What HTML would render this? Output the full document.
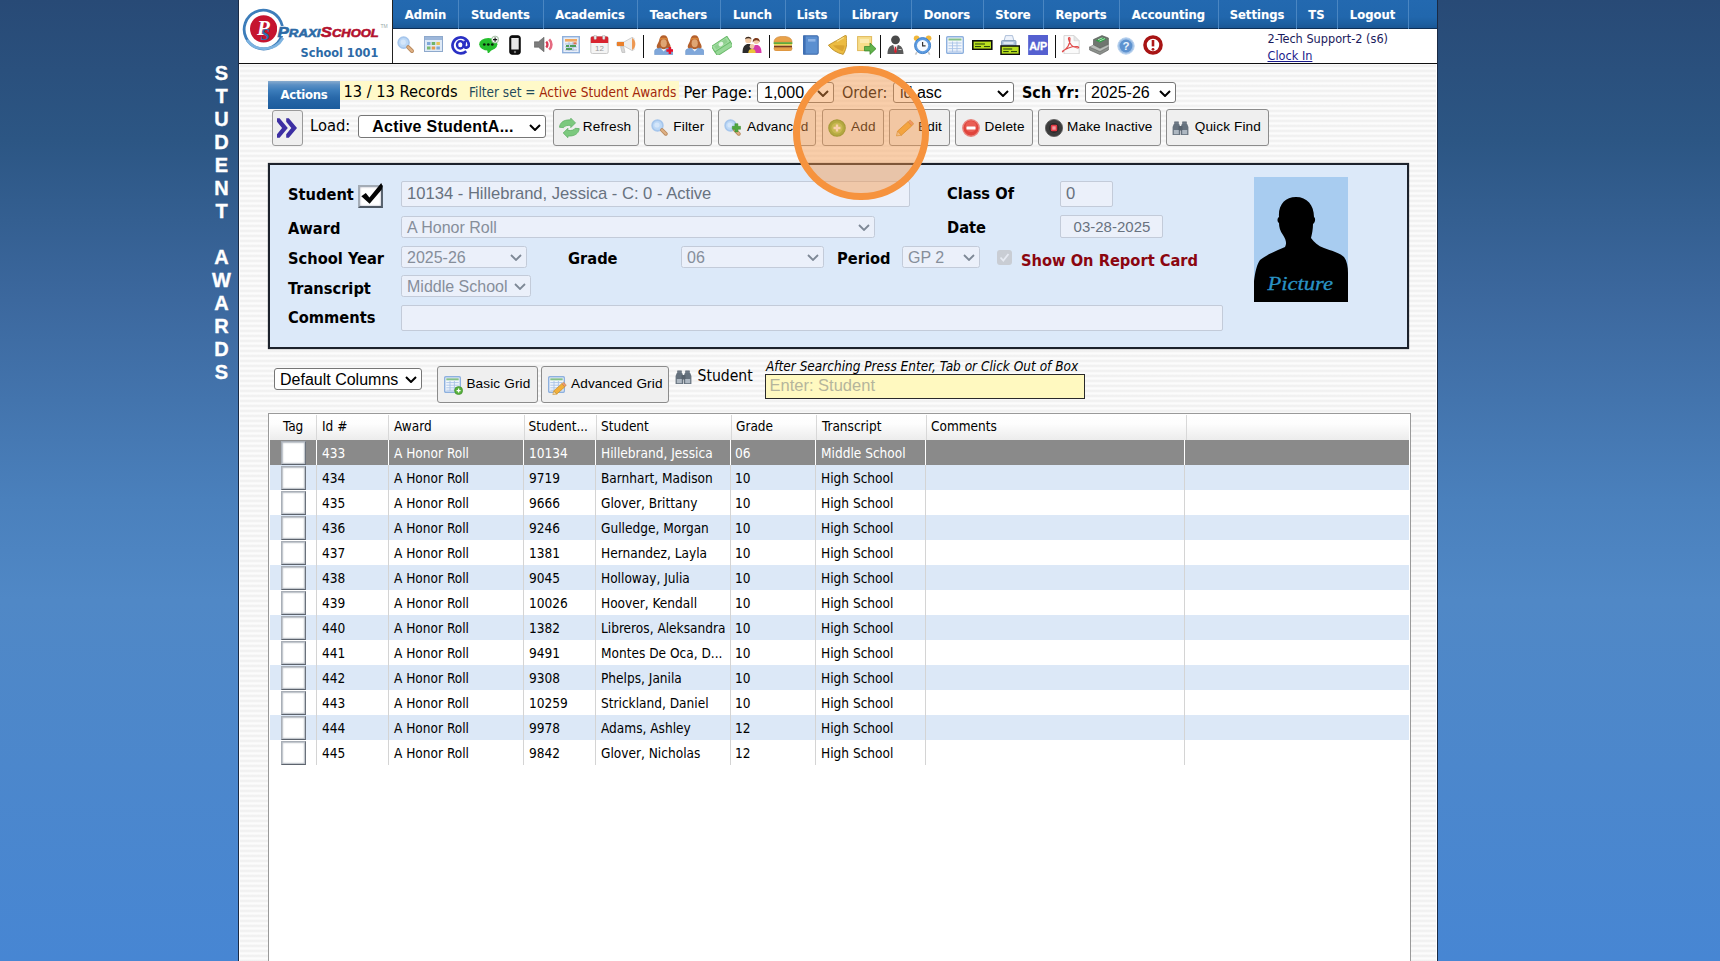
<!DOCTYPE html>
<html lang="en">
<head>
<meta charset="utf-8">
<title>Student Awards</title>
<style>
*{box-sizing:border-box;margin:0;padding:0}
html,body{width:1720px;height:961px;overflow:hidden}
body{position:relative;font-family:"DejaVu Sans Condensed","DejaVu Sans","Liberation Sans",sans-serif;font-size:13px;color:#000;
background:linear-gradient(to bottom,#284a76 0px,#2c5684 140px,#3c689e 300px,#4a80bc 500px,#5088c6 600px,#4786d3 961px);}
.abs{position:absolute}
#panel{position:absolute;left:238px;top:0;width:1200px;height:961px;border-left:1px solid #1a2a44;border-right:1px solid #1a2a44;
background:#fff repeating-linear-gradient(to bottom,#f1f1f1 0,#f2f2f2 1.8px,#fcfcfc 2.8px,#fcfcfc 4.2px,#f1f1f1 5px);box-shadow:inset 1px 0 0 #fff,inset -1px 0 0 #fff;}
#vt{position:absolute;left:210.5px;top:61.5px;width:22px;font-family:"Liberation Sans",sans-serif;font-weight:bold;font-size:20px;line-height:23px;color:#fff;text-align:center;-webkit-text-stroke:0.35px #fff}
#logo{position:absolute;left:239px;top:0;width:154px;height:63px;background:#fff;border-right:1px solid #222}
#menu{position:absolute;left:393px;top:0;width:1044px;height:29px;background:linear-gradient(to bottom,#2369b0 0,#2167ad 60%,#1d5fa0 85%,#1a5694 100%);border-bottom:1px solid #0e2f55}
#menu span{position:absolute;top:0;height:29px;line-height:29.4px;text-align:center;color:#fff;font-weight:bold;font-size:12.9px;border-right:1px solid #4a86c2;text-shadow:0 0 1px rgba(255,255,255,.3)}
#tool{position:absolute;left:393px;top:29px;width:1044px;height:34px;background:#fff}
#hline{position:absolute;left:239px;top:63px;width:1198px;height:1px;background:#111}

.tx{position:absolute;white-space:nowrap;line-height:1}
.btn{position:absolute;top:109px;height:37px;border:1px solid #8c8c8c;border-radius:3px;background:#efefef;font-family:"Liberation Sans",sans-serif;font-size:13.6px;letter-spacing:0.13px;color:#000;white-space:nowrap}
.btn b{position:absolute;top:9.2px;font-weight:normal;line-height:16px}
.btn svg{position:absolute}
.sel{position:absolute;border:1px solid #767676;border-radius:3px;background:#fff;font-family:"Liberation Sans",sans-serif;font-size:16px;color:#000;white-space:nowrap;overflow:hidden}
.sel i{position:absolute;font-style:normal;line-height:20px;top:0}
.sel svg{position:absolute;top:50%;margin-top:-3px;right:4px}
.dis{border-color:#c3cbd9;background:#ebf0fa;color:#868e9a;border-radius:2.5px}
.dis i{top:1px}
.inp{border-radius:2px;color:#68727f}
.lbl{position:absolute;margin-top:1px;font-weight:bold;font-size:16.3px;line-height:20px;white-space:nowrap;color:#000}

#grid{position:absolute;left:268px;top:413px;width:1143px;height:560px;background:#fff;border:1px solid #9a9a9a}
#gh{position:absolute;left:1px;top:1px;width:1139px;height:25px;background:linear-gradient(to bottom,#ffffff 0,#fdfdfd 35%,#ececec 100%)}
#gh span{position:absolute;top:0;height:25px;line-height:22.8px;font-size:13.5px;border-left:1px solid #d8d8d8;padding-left:5px;white-space:nowrap}
.gr{position:absolute;left:1px;width:1139px;height:25px;font-size:13.55px}
.gr span{position:absolute;top:0;height:25px;line-height:27px;border-left:1px solid #d4d4d4;padding-left:5px;white-space:nowrap;overflow:hidden}
.gr.a{background:#dce8f7}
.gr.s{background:#8a8a8a;color:#fff}
.gr.s span{border-left-color:#fff}
.cb{position:absolute;left:11px;top:1px;width:25px;height:24px;background:#fff;border:1.6px solid;border-color:#a9afb7 #6a717b #5c636d #a9afb7;box-shadow:inset 0 0 1.5px 1px #b4bac2}
</style>
</head>
<body>
<div id="vt">S<br>T<br>U<br>D<br>E<br>N<br>T<br><br>A<br>W<br>A<br>R<br>D<br>S</div>
<div id="panel"></div>
<div id="logo"></div>
<div id="menu">
<span style="left:0;width:66px">Admin</span>
<span style="left:65px;width:86px">Students</span>
<span style="left:150px;width:95px">Academics</span>
<span style="left:244px;width:84px">Teachers</span>
<span style="left:327px;width:66px">Lunch</span>
<span style="left:392px;width:55px">Lists</span>
<span style="left:446px;width:73px">Library</span>
<span style="left:518px;width:73px">Donors</span>
<span style="left:590px;width:61px">Store</span>
<span style="left:650px;width:77px">Reports</span>
<span style="left:726px;width:100px">Accounting</span>
<span style="left:825px;width:79px">Settings</span>
<span style="left:903px;width:42px">TS</span>
<span style="left:944px;width:72px">Logout</span>
</div>
<div id="tool"></div>
<div id="hline"></div>
<!--TB0--><svg class="abs" style="left:397px;top:36.3px" width="17.5" height="17.5" viewBox="0 0 17.5 17.5"><circle cx="6.6" cy="6.6" r="5.5" fill="#bcd8f6" stroke="#a6c6ec" stroke-width="1.6"/><circle cx="6.2" cy="6.2" r="2.6" fill="#d4e6fa"/><path d="M11.2 11.2 L15 15" stroke="#b98a5e" stroke-width="4" stroke-linecap="round"/><path d="M11.2 11.2 L15 15" stroke="#e0b184" stroke-width="2.2" stroke-linecap="round"/></svg>
<svg class="abs" style="left:424px;top:36.3px" width="19" height="16" viewBox="0 0 19 16"><rect x="0.5" y="0.5" width="18" height="15" fill="#dfeaf7" stroke="#8ea9cc"/><rect x="1" y="1" width="17" height="3" fill="#9db7da"/><rect x="3" y="6" width="3.5" height="3" fill="#7fa8d8"/><rect x="7.7" y="6" width="3.5" height="3" fill="#6fb36a"/><rect x="12.4" y="6" width="3.5" height="3" fill="#e7c45a"/><rect x="3" y="10.5" width="3.5" height="3" fill="#79b96f"/><rect x="7.7" y="10.5" width="3.5" height="3" fill="#e59a4c"/><rect x="12.4" y="10.5" width="3.5" height="3" fill="#7fa8d8"/></svg>
<svg class="abs" style="left:451px;top:34.5px" width="19" height="21" viewBox="0 0 19 21"><path d="M15.3 16.2 A8.2 8 0 1 1 17.9 9.8 C17.9 13 13.4 13.8 13.3 10.9 L13.9 5.6" fill="none" stroke="#2a30c4" stroke-width="2.7"/><ellipse cx="9.3" cy="9.8" rx="3.3" ry="3.7" fill="none" stroke="#2a30c4" stroke-width="2.4"/></svg>
<svg class="abs" style="left:478.7px;top:34.6px" width="20.3" height="18.6" viewBox="0 0 20.3 18.6"><path d="M8 14.3 L9 19 L13.5 14z" fill="#25bf2d"/><ellipse cx="9.3" cy="9.3" rx="9.1" ry="6.3" fill="#25bf2d"/><circle cx="5.3" cy="9.5" r="1.35" fill="#0a200a"/><circle cx="9.3" cy="9.5" r="1.35" fill="#0a200a"/><circle cx="13.3" cy="9.5" r="1.35" fill="#0a200a"/><circle cx="16.1" cy="4.6" r="3.5" fill="#f2f8f2" stroke="#8fb08f" stroke-width="0.8"/><path d="M14 4.6 h4.2 M16.1 2.5 v4.2" stroke="#111" stroke-width="1.1"/></svg>
<svg class="abs" style="left:509px;top:34.8px" width="12" height="20" viewBox="0 0 12 20"><rect x="0.8" y="0.8" width="10.4" height="18.4" rx="2" fill="#111" stroke="#000"/><rect x="2.3" y="3" width="7.4" height="11.5" fill="#e6e6e6"/><circle cx="6" cy="17" r="1.2" fill="#777"/></svg>
<svg class="abs" style="left:533.6px;top:37px" width="21" height="15" viewBox="0 0 21 15"><path d="M0.3 4.8 h4.2 l5.5 -4.6 v14.6 l-5.5 -4.6 h-4.2z" fill="#7c7c7c" stroke="#5e5e5e" stroke-width="0.6"/><path d="M12.2 4.6 a4 4 0 0 1 0 5.8" fill="none" stroke="#d83a55" stroke-width="2.4"/><path d="M15.2 2.4 a7 7 0 0 1 0 10.2" fill="none" stroke="#e56a80" stroke-width="2.6"/></svg>
<svg class="abs" style="left:562px;top:36.3px" width="18" height="17.4" viewBox="0 0 18 17.4"><rect x="0.7" y="0.7" width="16.6" height="16" fill="#e8eef8" stroke="#8fb0dc" stroke-width="1.4"/><rect x="3" y="3" width="12" height="2.6" fill="#f0a860"/><path d="M3 8 h12 M3 11 h12 M3 14 h12 M7 6 v9 M11 6 v9" stroke="#9fb6d6" stroke-width="0.8"/><rect x="4" y="9" width="3" height="2" fill="#4f9e5a"/><rect x="8" y="9" width="6" height="2" fill="#4f9e5a"/><rect x="4" y="12" width="6" height="2" fill="#4f9e5a"/><rect x="11.5" y="6.3" width="3" height="2" fill="#e0704a"/></svg>
<svg class="abs" style="left:589.5px;top:35.3px" width="19" height="19.4" viewBox="0 0 19 19.4"><rect x="0.8" y="1.5" width="17.4" height="17" rx="1.5" fill="#f4f4f4" stroke="#c9c9c9"/><path d="M0.8 3 a1.5 1.5 0 0 1 1.5 -1.5 h14.4 a1.5 1.5 0 0 1 1.5 1.5 v5 h-17.4z" fill="#d8232f"/><rect x="4" y="0" width="2.4" height="4.5" rx="1" fill="#eee" stroke="#999" stroke-width="0.5"/><rect x="12.6" y="0" width="2.4" height="4.5" rx="1" fill="#eee" stroke="#999" stroke-width="0.5"/><text x="9.5" y="16" text-anchor="middle" font-family="Liberation Sans,sans-serif" font-size="8" fill="#9a9a9a">12</text></svg>
<svg class="abs" style="left:616px;top:37.4px" width="20.5" height="17.2" viewBox="0 0 20.5 17.2"><path d="M2 5 h6 l8 -4.5 a2 2 0 0 1 2 1 v11 a2 2 0 0 1 -2 1 l-8 -4.5 h-6 a1.5 1.5 0 0 1 -1.5 -1.5 v-1 a1.5 1.5 0 0 1 1.5 -1.5z" fill="#efefef" stroke="#c4c4c4" stroke-width="0.8"/><path d="M1 5 h7 v4 h-7z" fill="#ea7f2a"/><path d="M16 1 a7 7 0 0 1 0 12" fill="#ef8b3a" opacity="0.85"/><path d="M4.5 9.5 l1.5 6 h3 l-1.3 -6z" fill="#d8d8d8" stroke="#b5b5b5" stroke-width="0.6"/></svg>
<div class="abs" style="left:643px;top:35px;width:1px;height:23px;background:#111"></div>
<svg class="abs" style="left:653.6px;top:34.8px" width="19.6" height="19.8" viewBox="0 0 19.6 19.8"><path d="M9.7 0.2 C12.5 0.2 13.6 2.2 14 4.5 C14.6 8 17 9.5 16.6 12.3 C16.3 14 13.5 14.3 9.7 14.3 C6 14.3 3.1 14 2.8 12.3 C2.4 9.5 4.8 8 5.4 4.5 C5.8 2.2 7 0.2 9.7 0.2z" fill="#b4602c"/><path d="M6 3.6 C7.5 2.4 12 2.4 13.4 3.6 L13.7 5 C12 4 7.5 4 5.7 5z" fill="#d98436"/><ellipse cx="9.7" cy="8.3" rx="3.1" ry="4" fill="#dfa574"/><path d="M0.6 19.7 L0.6 16 C0.6 14.3 3 13.4 6.2 13 L9.7 15.2 L13.2 13 C16.4 13.4 18.9 14.3 18.9 16 L18.9 19.7z" fill="#7fa7da" stroke="#6a93c8" stroke-width="0.5"/><path d="M6.6 13.2 L9.7 16.6 L12.8 13.2 L9.7 14.6z" fill="#eef3fa"/><path d="M12.4 15.4 h7 M15.9 11.9 v7" stroke="#e8102a" stroke-width="2.5"/></svg>
<svg class="abs" style="left:684.6px;top:34.8px" width="19.6" height="19.8" viewBox="0 0 19.6 19.8"><path d="M9.7 0.2 C12.5 0.2 13.6 2.2 14 4.5 C14.6 8 17 9.5 16.6 12.3 C16.3 14 13.5 14.3 9.7 14.3 C6 14.3 3.1 14 2.8 12.3 C2.4 9.5 4.8 8 5.4 4.5 C5.8 2.2 7 0.2 9.7 0.2z" fill="#b4602c"/><path d="M6 3.6 C7.5 2.4 12 2.4 13.4 3.6 L13.7 5 C12 4 7.5 4 5.7 5z" fill="#d98436"/><ellipse cx="9.7" cy="8.3" rx="3.1" ry="4" fill="#dfa574"/><path d="M0.6 19.7 L0.6 16 C0.6 14.3 3 13.4 6.2 13 L9.7 15.2 L13.2 13 C16.4 13.4 18.9 14.3 18.9 16 L18.9 19.7z" fill="#7fa7da" stroke="#6a93c8" stroke-width="0.5"/><path d="M6.6 13.2 L9.7 16.6 L12.8 13.2 L9.7 14.6z" fill="#eef3fa"/></svg>
<svg class="abs" style="left:711.8px;top:35.5px" width="20" height="19.5" viewBox="0 0 20 20"><g transform="rotate(-33 10 10)"><rect x="0.5" y="9.6" width="19" height="6.6" fill="#97d897" stroke="#68b868" stroke-width="1"/><rect x="0.5" y="4.6" width="19" height="6.8" fill="#a2dea2" stroke="#68b868" stroke-width="1"/><rect x="3" y="6" width="14" height="4" fill="#8fd08f"/><ellipse cx="10" cy="8" rx="2.6" ry="2" fill="#e2f5e2"/></g></svg>
<svg class="abs" style="left:742px;top:36px" width="20" height="17.2" viewBox="0 0 20 17.2"><circle cx="6.3" cy="4" r="3.2" fill="#f1c9a5"/><path d="M3 3.3 C3.5 0 9 0 9.5 3.3 C8 2 5 2 3 3.3z" fill="#3a2a20"/><path d="M0.5 17 C0.5 10.5 3 8 6.5 8 C10 8 11.5 10.5 11.5 17z" fill="#2b2b2b"/><circle cx="14.3" cy="5" r="3" fill="#f1c9a5"/><path d="M10.8 6.5 C10 0.5 18.5 0.5 17.8 6.5 C17 3.5 12 3.5 10.8 6.5z" fill="#7b3a1e"/><path d="M9.5 17 C9.5 11.5 11.5 9 14.5 9 C17.5 9 19.5 11.5 19.5 17z" fill="#d63aa8"/><circle cx="10" cy="10.5" r="2.4" fill="#f1c9a5"/><path d="M6.3 17 C6.3 14 8 13 10 13 C12 13 13.7 14 13.7 17z" fill="#e9c43a"/></svg>
<div class="abs" style="left:769px;top:35px;width:1px;height:23px;background:#111"></div>
<svg class="abs" style="left:773px;top:35.9px" width="20" height="15.2" viewBox="0 0 20 15.2"><path d="M1 6.2 C1 1.8 5 0.4 10 0.4 C15 0.4 19 1.8 19 6.2z" fill="#e9a24a" stroke="#c9822e" stroke-width="0.6"/><rect x="0.6" y="6.2" width="18.8" height="1.9" fill="#62a83a"/><rect x="1" y="8.1" width="18" height="1.6" fill="#e8d34a"/><rect x="1" y="9.7" width="18" height="2" fill="#7a3b1d"/><path d="M1 11.7 h18 v0.8 a2.5 2.5 0 0 1 -2.5 2.5 h-13 a2.5 2.5 0 0 1 -2.5 -2.5z" fill="#e9a24a" stroke="#c9822e" stroke-width="0.6"/></svg>
<svg class="abs" style="left:802px;top:35.3px" width="17" height="20" viewBox="0 0 17 20"><path d="M1.5 0.8 h13.5 a1.2 1.2 0 0 1 1.2 1.2 v16 a1.2 1.2 0 0 1 -1.2 1.2 h-13.5z" fill="#5b8fd0" stroke="#3a67a8" stroke-width="1"/><rect x="1" y="0.8" width="2.6" height="18.4" fill="#3f6fb3"/><rect x="6" y="4" width="7.5" height="2.6" fill="#8eb4e6"/></svg>
<svg class="abs" style="left:828px;top:34.8px" width="19.4" height="19.8" viewBox="0 0 19.4 19.8"><path d="M16.6 0.8 C17.6 -0.2 19 0.6 18.3 2 C19.2 6 19.2 13 15.2 19.4 C9 18 3.5 14.5 0.4 10.2 C5.5 7 12 4 16.6 0.8z" fill="#ecbc42" stroke="#bb902c" stroke-width="0.9"/><path d="M5 10.6 C8 13.5 11.5 15.5 14.6 16.2 C15.6 14.6 16.4 12.5 16.7 10.6 C13 10 9 10 5 10.6z" fill="#d9a431"/><path d="M9 6.5 C11.5 5.3 14 3.8 16 2.6" stroke="#f6dc8a" stroke-width="1.2" fill="none"/></svg>
<svg class="abs" style="left:857px;top:36.3px" width="19.6" height="18.6" viewBox="0 0 19.6 18.6"><rect x="0.6" y="0.6" width="14" height="14" fill="#f7dd8a" stroke="#e0b95a" stroke-width="1"/><rect x="3" y="3" width="9" height="4" fill="#fbeab0"/><path d="M7.5 10.5 h5.5 v-3.5 l6 5.7 l-6 5.7 v-3.5 h-5.5z" fill="#62b34a" stroke="#3e8a2e" stroke-width="0.8"/></svg>
<div class="abs" style="left:880px;top:35px;width:1px;height:23px;background:#111"></div>
<svg class="abs" style="left:887px;top:35px" width="17" height="19.4" viewBox="0 0 17 19.4"><circle cx="8.5" cy="4.8" r="4.4" fill="#4a4a4a"/><path d="M0.5 19 C0.5 12.5 3.5 10.5 6 10 L8.5 12 L11 10 C13.5 10.5 16.5 12.5 16.5 19z" fill="#5a5a5a"/><path d="M6.3 10 L8.5 18.5 L10.7 10 L8.5 11.8z" fill="#eeeeee"/><path d="M7.9 11.8 h1.2 l0.7 4.8 l-1.3 1.9 l-1.3 -1.9z" fill="#d81e2c"/><rect x="11.5" y="14" width="3" height="1" fill="#ccc"/></svg>
<svg class="abs" style="left:913px;top:34.6px" width="19.4" height="20" viewBox="0 0 19.4 20"><circle cx="3.6" cy="3.2" r="2.8" fill="#f0b73c"/><circle cx="15.6" cy="3.2" r="2.8" fill="#f0b73c"/><path d="M4 17 L2.5 19.7 M15.2 17 L16.7 19.7" stroke="#c9c9c9" stroke-width="1.6"/><circle cx="9.6" cy="10.6" r="8" fill="#5d9be0" stroke="#3f7fc8" stroke-width="1"/><circle cx="9.6" cy="10.6" r="5.6" fill="#f5f9fe"/><path d="M9.6 7 V10.8 L12.6 10.8" stroke="#333" stroke-width="1.2" fill="none"/></svg>
<div class="abs" style="left:939px;top:35px;width:1px;height:23px;background:#111"></div>
<svg class="abs" style="left:946px;top:35.8px" width="18" height="18" viewBox="0 0 18 18"><rect x="0.7" y="0.7" width="16.6" height="16.6" rx="1" fill="#f3f7fc" stroke="#8db0de" stroke-width="1.4"/><rect x="2.5" y="2.5" width="13" height="2" fill="#86c08a"/><path d="M2.5 7 h13 M2.5 9.8 h13 M2.5 12.6 h13 M2.5 15.2 h13 M6.5 5.5 v10.5 M11 5.5 v10.5" stroke="#a9c3e6" stroke-width="0.9"/></svg>
<svg class="abs" style="left:972.4px;top:39.7px" width="20.6" height="10.2" viewBox="0 0 20.6 10.2"><rect x="0.8" y="0.8" width="19" height="8.6" fill="#b9e01e" stroke="#0d0d0d" stroke-width="1.6"/><path d="M3 4 h10 M3 6.6 h6 M12 6.6 h6" stroke="#1e3a0a" stroke-width="1"/></svg>
<svg class="abs" style="left:1000px;top:35.3px" width="20" height="20" viewBox="0 0 20 20"><path d="M4 6 L5.5 0.6 h7 L14 6z" fill="#eef3fb" stroke="#9ab0cf" stroke-width="0.8"/><rect x="1.5" y="5.5" width="14.5" height="7" rx="1" fill="#a9bfd8" stroke="#7f98b8" stroke-width="0.8"/><rect x="3.5" y="7" width="10" height="2" fill="#dfe8f3"/><rect x="1" y="11" width="18.4" height="8.4" fill="#b9e01e" stroke="#0d0d0d" stroke-width="1.5"/><path d="M3.2 14 h9 M3.2 16.6 h5.5 M11 16.6 h6" stroke="#1e3a0a" stroke-width="1"/></svg>
<svg class="abs" style="left:1028px;top:35px" width="20.3" height="20" viewBox="0 0 20 20"><rect width="20" height="20" fill="#5560d0"/><text x="10" y="14.6" text-anchor="middle" font-family="Liberation Sans,sans-serif" font-weight="bold" font-size="10.8" fill="#fff" stroke="#fff" stroke-width="0.3">A/P</text></svg>
<div class="abs" style="left:1055px;top:35px;width:1px;height:23px;background:#111"></div>
<svg class="abs" style="left:1061.4px;top:35px" width="19.2" height="19.4" viewBox="0 0 19.2 19.4"><path d="M3 0.6 h10 l5.2 5.2 v13 h-15.2z" fill="#fafafa" stroke="#d0d0d0" stroke-width="0.9"/><path d="M13 0.6 v5.2 h5.2z" fill="#e6e6e6" stroke="#d0d0d0" stroke-width="0.6"/><path d="M1 16.5 C6 14.5 9.5 9 9 3.5 C8.8 2 7.2 2.3 7.5 4 C8.5 9 12 12.5 16.5 13 C18.2 13.2 18 11.6 16.3 11.5 C11 11.3 5 13.3 1.2 17.2" fill="none" stroke="#e04a4a" stroke-width="1.2"/></svg>
<svg class="abs" style="left:1089px;top:35px" width="20" height="19.8" viewBox="0 0 20 19.8"><path d="M4.5 4.5 L13 0.6 L19.4 3 L19.4 9.5 L11 13.5 L4.5 10z" fill="#6f766f" stroke="#4a504a" stroke-width="0.6"/><path d="M6.5 5.5 L13 2.6 L17.5 4.3 L11 7.5z" fill="#2f9e46"/><path d="M9 4.8 L13.5 2.8 M10.5 6 L16 3.6" stroke="#b9f0c2" stroke-width="0.9"/><path d="M0.6 12 L11 16.5 L19.4 12 L19.4 15 L11 19.6 L0.6 15z" fill="#8c918c" stroke="#555" stroke-width="0.6"/><path d="M0.6 12 L4.5 10 L11 13.5 L19.4 9.5 L19.4 12 L11 16.5z" fill="#b9beb9" stroke="#6a6a6a" stroke-width="0.5"/></svg>
<svg class="abs" style="left:1117px;top:36.6px" width="18" height="18" viewBox="0 0 18 18"><circle cx="9" cy="9" r="8.2" fill="#9fc0e6" stroke="#b9d2ee" stroke-width="1"/><circle cx="9" cy="9" r="6.4" fill="#5d92cf"/><text x="9" y="13.2" text-anchor="middle" font-family="Liberation Sans,sans-serif" font-weight="bold" font-size="11.5" fill="#e9f2fc">?</text></svg>
<svg class="abs" style="left:1143px;top:34.8px" width="20" height="20" viewBox="0 0 20 20"><circle cx="10" cy="10" r="8" fill="#fff" stroke="#a81414" stroke-width="3.6"/><path d="M10 5 V11.4" stroke="#b01818" stroke-width="2.6"/><circle cx="10" cy="14.3" r="1.4" fill="#b01818"/></svg>
<!--TB1-->




<div class="abs" style="left:268px;top:81px;width:72px;height:28px;background:linear-gradient(to bottom,#88abce 0,#5a8fc4 14%,#3b7cba 34%,#2868a9 60%,#1c5c9c 100%);color:#fff;font-weight:bold;font-size:13px;text-align:center;line-height:27px;letter-spacing:-0.3px">Actions</div>
<div class="abs" style="left:340px;top:81px;width:339px;height:19px;background:#fff9c9"></div>
<div class="tx" style="left:343.4px;top:84px;font-size:16.3px">13 / 13 Records</div>
<div class="tx" style="left:469px;top:86px;font-size:13.5px;color:#1f4a5c">Filter set = <span style="color:#a3260a">Active Student Awards</span></div>
<div class="tx" style="left:683.4px;top:85px;font-size:16.4px">Per Page:</div>
<div class="sel" style="left:757px;top:82px;width:77px;height:21px"><i style="left:6px">1,000</i><svg width="12" height="7" viewBox="0 0 12 7"><path d="M1 1 L6 6 L11 1" fill="none" stroke="#000" stroke-width="2"/></svg></div>
<div class="tx" style="left:842px;top:85px;font-size:16px">Order:</div>
<div class="sel" style="left:893px;top:82px;width:121px;height:21px"><i style="left:6px">id asc</i><svg width="12" height="7" viewBox="0 0 12 7"><path d="M1 1 L6 6 L11 1" fill="none" stroke="#000" stroke-width="2"/></svg></div>
<div class="tx" style="left:1022px;top:85px;font-size:16px;font-weight:bold">Sch Yr:</div>
<div class="sel" style="left:1085px;top:82px;width:91px;height:21px"><i style="left:5px">2025-26</i><svg width="12" height="7" viewBox="0 0 12 7"><path d="M1 1 L6 6 L11 1" fill="none" stroke="#000" stroke-width="2"/></svg></div>
<!--ROW1-->
<div class="btn" style="left:272px;top:110px;width:31px;height:36px;border-color:#9a9a9a"><svg style="left:4px;top:7.3px" width="21" height="20" viewBox="0 0 21 19.7"><path d="M0 0 L2.6 0 L10.8 9.85 L2.6 19.7 L0 19.7 L0 16 L5.1 9.85 L0 3.7 Z" fill="#3d2fa3"/><path transform="translate(9.2 0)" d="M0 0 L2.6 0 L10.8 9.85 L2.6 19.7 L0 19.7 L0 16 L5.1 9.85 L0 3.7 Z" fill="#3d2fa3"/></svg></div>
<div class="tx" style="left:310px;top:118px;font-size:16.4px">Load:</div>
<div class="sel" style="left:358px;top:115px;width:188px;height:23px;font-weight:bold"><i style="left:13.2px;top:1px;letter-spacing:0.26px">Active StudentA...</i><svg width="12" height="7" viewBox="0 0 12 7"><path d="M1 1 L6 6 L11 1" fill="none" stroke="#000" stroke-width="2"/></svg></div>
<div class="btn" style="left:553px;width:86px"><b style="left:28.8px">Refresh</b></div>
<div class="btn" style="left:644px;width:68px"><b style="left:28.3px">Filter</b></div>
<div class="btn" style="left:718px;width:98px"><b style="left:28px">Advanced</b></div>
<div class="btn" style="left:822px;width:62px"><b style="left:28px">Add</b></div>
<div class="btn" style="left:889px;width:61px"><b style="left:28px">Edit</b></div>
<div class="btn" style="left:955px;width:78px"><b style="left:28.6px">Delete</b></div>
<div class="btn" style="left:1038px;width:123px"><b style="left:28px">Make Inactive</b></div>
<div class="btn" style="left:1166px;width:103px"><b style="left:27.7px">Quick Find</b></div>
<!--ROW2-->
<div class="abs" style="left:268px;top:163px;width:1141px;height:186px;background:#dce9f9;border:2px solid #1c222c;box-shadow:0 0 1px #555"></div>
<div class="lbl" style="left:288px;top:184px">Student</div>
<div class="abs" style="left:358px;top:184.5px;width:25px;height:23px;background:#fff;border:2px solid;border-color:#a4acb6 #5a6470 #4e5864 #a4acb6;box-shadow:inset 0 0 2px #99a"></div>
<svg class="abs" style="left:358px;top:180px" width="28" height="28" viewBox="0 -4.5 28 28"><path d="M3.3 11.7 L7.8 8.5 L11.4 13 L23.2 -1.6 L24.6 1.8 L23.6 5.3 L11.6 19.2 Z" fill="#050505"/></svg>
<div class="sel dis inp" style="left:401px;top:181px;width:509px;height:26px"><i style="left:5px;top:2px;font-size:16.6px">10134 - Hillebrand, Jessica - C: 0 - Active</i></div>
<div class="lbl" style="left:288px;top:218px">Award</div>
<div class="sel dis" style="left:401px;top:216px;width:474px;height:22px"><i style="left:5px">A Honor Roll</i><svg width="12" height="7" viewBox="0 0 12 7"><path d="M1 1 L6 6 L11 1" fill="none" stroke="#7e8896" stroke-width="1.8"/></svg></div>
<div class="lbl" style="left:288px;top:248px">School Year</div>
<div class="sel dis" style="left:401px;top:246px;width:126px;height:22px"><i style="left:5px">2025-26</i><svg width="12" height="7" viewBox="0 0 12 7"><path d="M1 1 L6 6 L11 1" fill="none" stroke="#7e8896" stroke-width="1.8"/></svg></div>
<div class="lbl" style="left:568px;top:248px">Grade</div>
<div class="sel dis" style="left:681px;top:246px;width:143px;height:22px"><i style="left:5px">06</i><svg width="12" height="7" viewBox="0 0 12 7"><path d="M1 1 L6 6 L11 1" fill="none" stroke="#7e8896" stroke-width="1.8"/></svg></div>
<div class="lbl" style="left:837px;top:248px">Period</div>
<div class="sel dis" style="left:902px;top:246px;width:78px;height:22px"><i style="left:5px">GP 2</i><svg width="12" height="7" viewBox="0 0 12 7"><path d="M1 1 L6 6 L11 1" fill="none" stroke="#7e8896" stroke-width="1.8"/></svg></div>
<div class="abs" style="left:997px;top:250px;width:15px;height:15px;background:#c9cdd4;border-radius:3px"><svg class="abs" style="left:2px;top:2px" width="11" height="11" viewBox="0 0 11 11"><path d="M1.5 5.5 L4.3 8.5 L9.5 2" fill="none" stroke="#e6eaf2" stroke-width="1.8"/></svg></div>
<div class="lbl" style="left:1021px;top:250px;color:#8b0610">Show On Report Card</div>
<div class="lbl" style="left:288px;top:278px">Transcript</div>
<div class="sel dis" style="left:401px;top:275px;width:130px;height:22px"><i style="left:5px">Middle School</i><svg width="12" height="7" viewBox="0 0 12 7"><path d="M1 1 L6 6 L11 1" fill="none" stroke="#7e8896" stroke-width="1.8"/></svg></div>
<div class="lbl" style="left:288px;top:307px">Comments</div>
<div class="sel dis inp" style="left:401px;top:305px;width:822px;height:26px"></div>
<div class="lbl" style="left:947px;top:183px">Class Of</div>
<div class="sel dis inp" style="left:1060px;top:181px;width:53px;height:26px"><i style="left:5px;top:2px;font-size:16.6px">0</i></div>
<div class="lbl" style="left:947px;top:217px">Date</div>
<div class="sel dis inp" style="left:1060px;top:215px;width:103px;height:23px"><i style="left:12.6px;top:1px;font-size:15px">03-28-2025</i></div>
<svg class="abs" style="left:1254px;top:177px" width="94" height="125" viewBox="0 0 94 125">
<rect width="94" height="125" fill="#a8ccf0"/>
<path d="M0 125 L0 104 C1 95 3 87 6 83 C12 78 22 74 31 70 C33 66 32 63 29 58 C26 54 25 50 25 46 C23 45 23 41 25 40 C24 28 31 20 42 20 C53 20 60 28 60 40 C62 41 61 46 59 47 C59 52 58 57 57 61 C60 65 64 69 70 71 C78 74 86 76 90 80 C93 84 94 90 94 96 L94 125 Z" fill="#000"/>
<text x="13.5" y="113" textLength="65.5" lengthAdjust="spacingAndGlyphs" font-family="Liberation Serif,serif" font-style="italic" font-size="19" fill="#2a93c4" stroke="#2a93c4" stroke-width="0.3">Picture</text>
</svg>
<!--FORM-->
<div class="sel" style="left:274px;top:368px;width:148px;height:22px"><i style="left:5px;top:1px">Default Columns</i><svg width="12" height="7" viewBox="0 0 12 7"><path d="M1 1 L6 6 L11 1" fill="none" stroke="#000" stroke-width="2"/></svg></div>
<div class="btn" style="left:437px;top:366px;width:101px"><b style="left:28.4px">Basic Grid</b></div>
<div class="btn" style="left:541px;top:366px;width:128px"><b style="left:29px">Advanced Grid</b></div>
<div class="tx" style="left:697.5px;top:369px;font-size:15.6px">Student</div>
<div class="tx" style="left:766px;top:360px;font-size:13.5px;font-style:italic">After Searching Press Enter, Tab or Click Out of Box</div>
<div class="abs" style="left:765px;top:374px;width:320px;height:25px;background:#fff9c0;border:1px solid #2a2a2a;font-family:'Liberation Sans',sans-serif;font-size:16.5px;color:#b5b59c;line-height:20.4px;padding-left:3.5px">Enter: Student</div>
<!--GRIDBAR-->
<div id="grid"><div id="gh"><span style="left:0px;width:47px;border-left:0;padding-left:13px">Tag</span><span style="left:46px;width:72px">Id #</span><span style="left:118px;width:135px">Award</span><span style="left:254px;width:72px;padding-left:3.6px">Student...</span><span style="left:326px;width:135px;padding-left:4px">Student</span><span style="left:461px;width:85px;padding-left:4px">Grade</span><span style="left:546px;width:110px">Transcript</span><span style="left:656px;width:259px;padding-left:4px">Comments</span><span style="left:916px;width:225px"></span></div>
<div class="gr s" style="top:26px"><span style="left:0;width:47px;border-left:0"><em class="cb"></em></span><span style="left:46px;width:72px">433</span><span style="left:118px;width:135px">A Honor Roll</span><span style="left:253px;width:72px">10134</span><span style="left:325px;width:135px">Hillebrand, Jessica</span><span style="left:460px;width:85px;padding-left:4px">06</span><span style="left:545px;width:110px">Middle School</span><span style="left:655px;width:259px"></span><span style="left:914px;width:225px"></span></div>
<div class="gr a" style="top:51px"><span style="left:0;width:47px;border-left:0"><em class="cb"></em></span><span style="left:46px;width:72px">434</span><span style="left:118px;width:135px">A Honor Roll</span><span style="left:253px;width:72px">9719</span><span style="left:325px;width:135px">Barnhart, Madison</span><span style="left:460px;width:85px;padding-left:4px">10</span><span style="left:545px;width:110px">High School</span><span style="left:655px;width:259px"></span><span style="left:914px;width:225px"></span></div>
<div class="gr" style="top:76px"><span style="left:0;width:47px;border-left:0"><em class="cb"></em></span><span style="left:46px;width:72px">435</span><span style="left:118px;width:135px">A Honor Roll</span><span style="left:253px;width:72px">9666</span><span style="left:325px;width:135px">Glover, Brittany</span><span style="left:460px;width:85px;padding-left:4px">10</span><span style="left:545px;width:110px">High School</span><span style="left:655px;width:259px"></span><span style="left:914px;width:225px"></span></div>
<div class="gr a" style="top:101px"><span style="left:0;width:47px;border-left:0"><em class="cb"></em></span><span style="left:46px;width:72px">436</span><span style="left:118px;width:135px">A Honor Roll</span><span style="left:253px;width:72px">9246</span><span style="left:325px;width:135px">Gulledge, Morgan</span><span style="left:460px;width:85px;padding-left:4px">10</span><span style="left:545px;width:110px">High School</span><span style="left:655px;width:259px"></span><span style="left:914px;width:225px"></span></div>
<div class="gr" style="top:126px"><span style="left:0;width:47px;border-left:0"><em class="cb"></em></span><span style="left:46px;width:72px">437</span><span style="left:118px;width:135px">A Honor Roll</span><span style="left:253px;width:72px">1381</span><span style="left:325px;width:135px">Hernandez, Layla</span><span style="left:460px;width:85px;padding-left:4px">10</span><span style="left:545px;width:110px">High School</span><span style="left:655px;width:259px"></span><span style="left:914px;width:225px"></span></div>
<div class="gr a" style="top:151px"><span style="left:0;width:47px;border-left:0"><em class="cb"></em></span><span style="left:46px;width:72px">438</span><span style="left:118px;width:135px">A Honor Roll</span><span style="left:253px;width:72px">9045</span><span style="left:325px;width:135px">Holloway, Julia</span><span style="left:460px;width:85px;padding-left:4px">10</span><span style="left:545px;width:110px">High School</span><span style="left:655px;width:259px"></span><span style="left:914px;width:225px"></span></div>
<div class="gr" style="top:176px"><span style="left:0;width:47px;border-left:0"><em class="cb"></em></span><span style="left:46px;width:72px">439</span><span style="left:118px;width:135px">A Honor Roll</span><span style="left:253px;width:72px">10026</span><span style="left:325px;width:135px">Hoover, Kendall</span><span style="left:460px;width:85px;padding-left:4px">10</span><span style="left:545px;width:110px">High School</span><span style="left:655px;width:259px"></span><span style="left:914px;width:225px"></span></div>
<div class="gr a" style="top:201px"><span style="left:0;width:47px;border-left:0"><em class="cb"></em></span><span style="left:46px;width:72px">440</span><span style="left:118px;width:135px">A Honor Roll</span><span style="left:253px;width:72px">1382</span><span style="left:325px;width:135px">Libreros, Aleksandra</span><span style="left:460px;width:85px;padding-left:4px">10</span><span style="left:545px;width:110px">High School</span><span style="left:655px;width:259px"></span><span style="left:914px;width:225px"></span></div>
<div class="gr" style="top:226px"><span style="left:0;width:47px;border-left:0"><em class="cb"></em></span><span style="left:46px;width:72px">441</span><span style="left:118px;width:135px">A Honor Roll</span><span style="left:253px;width:72px">9491</span><span style="left:325px;width:135px">Montes De Oca, D...</span><span style="left:460px;width:85px;padding-left:4px">10</span><span style="left:545px;width:110px">High School</span><span style="left:655px;width:259px"></span><span style="left:914px;width:225px"></span></div>
<div class="gr a" style="top:251px"><span style="left:0;width:47px;border-left:0"><em class="cb"></em></span><span style="left:46px;width:72px">442</span><span style="left:118px;width:135px">A Honor Roll</span><span style="left:253px;width:72px">9308</span><span style="left:325px;width:135px">Phelps, Janila</span><span style="left:460px;width:85px;padding-left:4px">10</span><span style="left:545px;width:110px">High School</span><span style="left:655px;width:259px"></span><span style="left:914px;width:225px"></span></div>
<div class="gr" style="top:276px"><span style="left:0;width:47px;border-left:0"><em class="cb"></em></span><span style="left:46px;width:72px">443</span><span style="left:118px;width:135px">A Honor Roll</span><span style="left:253px;width:72px">10259</span><span style="left:325px;width:135px">Strickland, Daniel</span><span style="left:460px;width:85px;padding-left:4px">10</span><span style="left:545px;width:110px">High School</span><span style="left:655px;width:259px"></span><span style="left:914px;width:225px"></span></div>
<div class="gr a" style="top:301px"><span style="left:0;width:47px;border-left:0"><em class="cb"></em></span><span style="left:46px;width:72px">444</span><span style="left:118px;width:135px">A Honor Roll</span><span style="left:253px;width:72px">9978</span><span style="left:325px;width:135px">Adams, Ashley</span><span style="left:460px;width:85px;padding-left:4px">12</span><span style="left:545px;width:110px">High School</span><span style="left:655px;width:259px"></span><span style="left:914px;width:225px"></span></div>
<div class="gr" style="top:326px"><span style="left:0;width:47px;border-left:0"><em class="cb"></em></span><span style="left:46px;width:72px">445</span><span style="left:118px;width:135px">A Honor Roll</span><span style="left:253px;width:72px">9842</span><span style="left:325px;width:135px">Glover, Nicholas</span><span style="left:460px;width:85px;padding-left:4px">12</span><span style="left:545px;width:110px">High School</span><span style="left:655px;width:259px"></span><span style="left:914px;width:225px"></span></div>
</div>
<!--GRID-->
<!--BI0--><svg class="abs" style="left:558.7px;top:118px" width="21" height="20" viewBox="0 0 21 20"><path d="M0.5 9.3 C0.8 5.5 3.5 2.6 8.3 2 L11.8 1.8 L11.8 0.2 L16.5 4.9 L11.8 9.6 L11.8 7.4 C8 7.2 5.5 7.8 4.6 9.6 Z" fill="#7cc97e" stroke="#5fb064" stroke-width="0.8"/><path d="M20.2 10.6 C19.9 14.4 17.2 17.3 12.4 17.9 L8.9 18.1 L8.9 19.7 L4.2 15 L8.9 10.3 L8.9 12.5 C12.7 12.7 15.2 12.1 16.1 10.3 Z" fill="#7cc97e" stroke="#5fb064" stroke-width="0.8"/></svg>
<svg class="abs" style="left:651px;top:119px" width="17" height="17" viewBox="0 0 17 17"><circle cx="6.5" cy="6.5" r="5.4" fill="#bcd8f6" stroke="#a6c6ec" stroke-width="1.6"/><circle cx="6" cy="6" r="2.6" fill="#d4e6fa"/><path d="M11 11 L14.8 14.8" stroke="#b98a5e" stroke-width="3.8" stroke-linecap="round"/><path d="M11 11 L14.8 14.8" stroke="#e0b184" stroke-width="2" stroke-linecap="round"/></svg>
<svg class="abs" style="left:724.4px;top:119px" width="17" height="17" viewBox="0 0 17 17"><circle cx="6.5" cy="6.5" r="5.4" fill="#bcd8f6" stroke="#a6c6ec" stroke-width="1.6"/><circle cx="6" cy="6" r="2.6" fill="#d4e6fa"/><path d="M11 11 L14.8 14.8" stroke="#b98a5e" stroke-width="3.8" stroke-linecap="round"/><path d="M11 11 L14.8 14.8" stroke="#e0b184" stroke-width="2" stroke-linecap="round"/><path d="M8.3 7.3 h2.6 v-2.6 h3 v2.6 h2.6 v3 h-2.6 v2.6 h-3 v-2.6 h-2.6z" fill="#4fa83f" stroke="#3a8a2e" stroke-width="0.5"/></svg>
<svg class="abs" style="left:828px;top:118.8px" width="18" height="18" viewBox="0 0 18 18"><circle cx="9" cy="9" r="8.2" fill="#7fba3c" stroke="#6aa030" stroke-width="1.2"/><circle cx="9" cy="9" r="5.6" fill="#a5d45c"/><path d="M5.5 9 h7 M9 5.5 v7" stroke="#fff" stroke-width="2.4"/></svg>
<svg class="abs" style="left:896px;top:119px" width="19" height="18" viewBox="0 0 19 18"><g transform="rotate(-42 9.5 9)"><rect x="1.5" y="6" width="14" height="5.6" fill="#f2b03a" stroke="#c88a24" stroke-width="0.8"/><rect x="15.5" y="6" width="3" height="5.6" rx="1.2" fill="#e9967a" stroke="#c88a24" stroke-width="0.6"/><path d="M1.5 6 L-2.5 8.8 L1.5 11.6z" fill="#f3dcae" stroke="#c88a24" stroke-width="0.6"/></g></svg>
<svg class="abs" style="left:962px;top:118.8px" width="18" height="18" viewBox="0 0 18 18"><circle cx="9" cy="9" r="8.2" fill="#e0443c" stroke="#e8837c" stroke-width="1.4"/><circle cx="9" cy="7.5" r="5.5" fill="#ec6a60" opacity="0.7"/><rect x="4.5" y="7.5" width="9" height="3" rx="0.6" fill="#fff"/></svg>
<svg class="abs" style="left:1045px;top:119px" width="18" height="18" viewBox="0 0 18 18"><circle cx="9" cy="9" r="8.6" fill="#3c3c3c" stroke="#5a5a5a" stroke-width="0.8"/><circle cx="9" cy="9" r="5" fill="#2a2a2a"/><rect x="5.8" y="5.8" width="6.4" height="6.4" rx="1.2" fill="#e23b45"/><rect x="7.3" y="7.3" width="3.4" height="3.4" fill="#f29aa0"/></svg>
<svg class="abs" style="left:1172px;top:120.5px" width="17" height="14.5" viewBox="0 0 17 14.5"><path d="M2.5 3 V0.8 h4 V3 M10.5 3 V0.8 h4 V3" fill="#6e7a86" stroke="#58636e" stroke-width="0.5"/><path d="M1.8 3 h5.4 l1 3 v8 h-7.6 v-8z" fill="#66727e"/><path d="M9.8 3 h5.4 l1.2 3 v8 h-7.6 v-8z" fill="#66727e"/><rect x="6.5" y="5" width="4" height="4.5" fill="#58636e"/><rect x="1.8" y="9" width="5" height="4.2" fill="#aeb8c2"/><rect x="10.2" y="9" width="5" height="4.2" fill="#aeb8c2"/></svg>
<svg class="abs" style="left:444.4px;top:376.3px" width="19" height="19" viewBox="0 0 19 19"><rect x="0.7" y="0.7" width="15.6" height="15.6" rx="1" fill="#f1f6fc" stroke="#8db0de" stroke-width="1.4"/><rect x="2.3" y="2.3" width="12.4" height="2" fill="#86c08a"/><path d="M2.3 6.6 h12.4 M2.3 9.2 h12.4 M2.3 11.8 h12.4 M2.3 14.2 h12.4 M6 5 v10 M10.4 5 v10" stroke="#a9c3e6" stroke-width="0.9"/><circle cx="14.6" cy="14.6" r="4" fill="#58b13c" stroke="#3f8f2c" stroke-width="0.7"/><path d="M12.6 14.6 h4 M14.6 12.6 v4" stroke="#fff" stroke-width="1.3"/></svg>
<svg class="abs" style="left:547.5px;top:376.3px" width="19" height="19" viewBox="0 0 19 19"><rect x="0.7" y="0.7" width="15.6" height="15.6" rx="1" fill="#f1f6fc" stroke="#8db0de" stroke-width="1.4"/><rect x="2.3" y="2.3" width="12.4" height="2" fill="#86c08a"/><path d="M2.3 6.6 h12.4 M2.3 9.2 h12.4 M2.3 11.8 h12.4 M2.3 14.2 h12.4 M6 5 v10 M10.4 5 v10" stroke="#a9c3e6" stroke-width="0.9"/><g transform="translate(4.5,5.5) scale(0.78) rotate(-42 9.5 9)"><rect x="1.5" y="6" width="14" height="5.6" fill="#f2b03a" stroke="#c88a24" stroke-width="0.8"/><rect x="15.5" y="6" width="3" height="5.6" rx="1.2" fill="#e9967a" stroke="#c88a24" stroke-width="0.6"/><path d="M1.5 6 L-2.5 8.8 L1.5 11.6z" fill="#f3dcae" stroke="#c88a24" stroke-width="0.6"/></g></svg>
<svg class="abs" style="left:675px;top:370px" width="17" height="14.5" viewBox="0 0 17 14.5"><path d="M2.5 3 V0.8 h4 V3 M10.5 3 V0.8 h4 V3" fill="#6e7a86" stroke="#58636e" stroke-width="0.5"/><path d="M1.8 3 h5.4 l1 3 v8 h-7.6 v-8z" fill="#66727e"/><path d="M9.8 3 h5.4 l1.2 3 v8 h-7.6 v-8z" fill="#66727e"/><rect x="6.5" y="5" width="4" height="4.5" fill="#58636e"/><rect x="1.8" y="9" width="5" height="4.2" fill="#aeb8c2"/><rect x="10.2" y="9" width="5" height="4.2" fill="#aeb8c2"/></svg>
<svg class="abs" style="left:239px;top:0" width="153" height="63" viewBox="0 0 153 63">
<ellipse cx="24.4" cy="29.6" rx="19.2" ry="19.4" fill="none" stroke="#3d7dba" stroke-width="2.8" transform="rotate(-25 24.4 29.6)"/>
<path d="M8 40 C16 52 36 52 44 38" fill="none" stroke="#7db3e0" stroke-width="2.6"/>
<circle cx="24.6" cy="28.8" r="13.6" fill="#c5142f"/>
<rect x="38" y="26" width="10" height="10" fill="#fff"/>
<text x="18" y="35" font-family="Liberation Serif,serif" font-style="italic" font-weight="bold" font-size="21" fill="#fff">P</text>
<text x="21.5" y="40" font-family="Liberation Serif,serif" font-style="italic" font-weight="bold" font-size="17" fill="#2f6fb0">S</text>
<text x="38.5" y="36.6" textLength="43" lengthAdjust="spacingAndGlyphs" font-family="Liberation Sans,sans-serif" font-style="italic" font-weight="bold" font-size="15.2" fill="#2d6aa6" stroke="#2d6aa6" stroke-width="0.6">P<tspan font-size="11.8">RAXI</tspan></text>
<text x="81.8" y="36.6" textLength="58" lengthAdjust="spacingAndGlyphs" font-family="Liberation Sans,sans-serif" font-style="italic" font-weight="bold" font-size="15.2" fill="#b3122e" stroke="#b3122e" stroke-width="0.6">S<tspan font-size="11.8">CHOOL</tspan></text>
<text x="141.5" y="28" font-family="Liberation Sans,sans-serif" font-size="5" fill="#9aa">TM</text>
<text x="61.5" y="56.6" font-family="DejaVu Sans Condensed,DejaVu Sans,sans-serif" font-weight="bold" font-size="12.6" fill="#2d6aa6">School 1001</text>
</svg>
<div class="tx" style="left:1267.5px;top:33.4px;font-size:12.6px;color:#1a1a5c">2-Tech Support-2 (s6)</div>
<div class="tx" style="left:1267.5px;top:49.6px;font-size:12.6px;color:#1a1a8c;text-decoration:underline">Clock In</div>
<!--BI1--><div class="abs" style="left:793.4px;top:65.7px;width:135.2px;height:134.4px;border-radius:50%;border:7.6px solid #f6933e;background:rgba(246,150,70,0.45)"></div>
<!--CIRCLE-->
</body>
</html>
